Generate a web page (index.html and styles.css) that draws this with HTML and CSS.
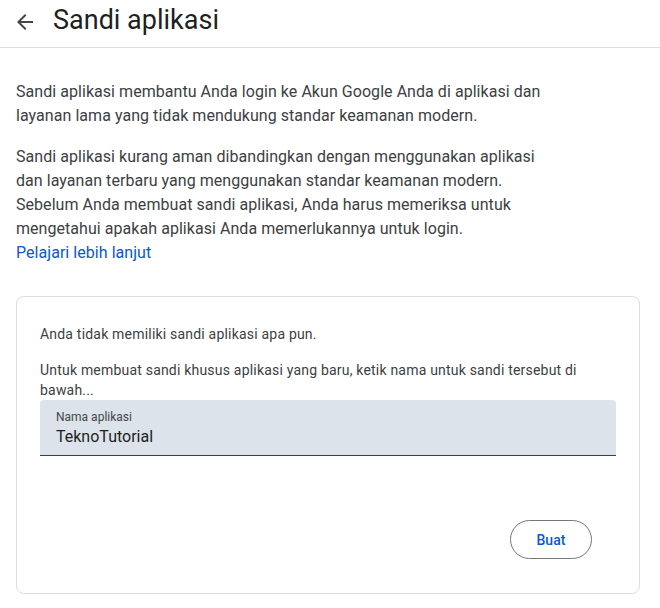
FILE: index.html
```html
<!DOCTYPE html>
<html lang="id">
<head>
<meta charset="utf-8">
<title>Sandi aplikasi</title>
<link rel="stylesheet" href="styles.css">
</head>
<body>
<header class="topbar">
  <button class="back" aria-label="Kembali">
    <svg width="24" height="24" viewBox="0 0 24 24"><path d="M20 11H7.83l5.59-5.59L12 4l-8 8 8 8 1.41-1.41L7.83 13H20v-2z" fill="#444746"/></svg>
  </button>
  <h1 class="title">Sandi aplikasi</h1>
</header>
<main class="content">
  <p class="intro">Sandi aplikasi membantu Anda login ke Akun Google Anda di aplikasi dan layanan lama yang tidak mendukung standar keamanan modern.</p>
  <p class="intro">Sandi aplikasi kurang aman dibandingkan dengan menggunakan aplikasi dan layanan terbaru yang menggunakan standar keamanan modern. Sebelum Anda membuat sandi aplikasi, Anda harus memeriksa untuk mengetahui apakah aplikasi Anda memerlukannya untuk login.<br><a class="link" href="#">Pelajari lebih lanjut</a></p>
  <section class="card">
    <p class="note">Anda tidak memiliki sandi aplikasi apa pun.</p>
    <p class="note hint">Untuk membuat sandi khusus aplikasi yang baru, ketik nama untuk sandi tersebut di bawah...</p>
    <div class="field">
      <span class="field-label">Nama aplikasi</span>
      <span class="field-value">TeknoTutorial</span>
    </div>
    <div class="actions">
      <button class="btn">Buat</button>
    </div>
  </section>
</main>
</body>
</html>
```
FILE: styles.css
```css
* { box-sizing: border-box; }
html, body { margin: 0; padding: 0; background: #fff; }
body { font-family: Roboto, "Noto Sans", sans-serif; color: #1f1f1f; }

.topbar {
  height: 48px;
  display: flex;
  align-items: center;
  border-bottom: 1px solid #dadce0;
  padding: 0 0 0 13px;
}
.back {
  width: 24px; height: 24px; padding: 0; margin: 0 16px 0 0;
  border: 0; background: none; display: flex;
  position: relative; top: -2px;
}
.title {
  margin: 0;
  font-size: 27px;
  font-weight: 400;
  color: #1f1f1f;
  line-height: 36px;
  position: relative; top: -4px;
}

.content { padding: 32px 20px 0 16px; }
.intro {
  margin: 0 0 17px;
  max-width: 530px;
  font-size: 16px;
  line-height: 24px;
  letter-spacing: 0.05px;
  color: #3c4043;
}
.link { color: #0b57d0; text-decoration: none; }

.card {
  margin-top: 31px;
  border: 1px solid #dadce0;
  border-radius: 8px;
  padding: 27px 23px 34px 23px;
}
.note {
  margin: 0;
  font-size: 14px;
  line-height: 20px;
  letter-spacing: 0.2px;
  color: #3c4043;
}
.hint { margin-top: 16px; }

.field {
  display: flex;
  flex-direction: column;
  background: #dce3ea;
  border-radius: 4px 4px 0 0;
  border-bottom: 1px solid #3c4043;
  padding: 9px 16px 6px;
  height: 56px;
}
.field-label { font-size: 12px; line-height: 16px; color: #444746; }
.field-value { font-size: 16px; line-height: 22px; color: #1f1f1f; margin-top: 1px; }

.actions { display: flex; justify-content: flex-end; margin: 64px 24px 0 0; }
.btn {
  width: 82px; height: 39px;
  border: 1px solid #747775;
  border-radius: 20px;
  background: #fff;
  color: #0b57d0;
  font-family: Roboto, sans-serif;
  font-size: 14px;
  font-weight: 500;
  letter-spacing: 0.1px;
}
```
